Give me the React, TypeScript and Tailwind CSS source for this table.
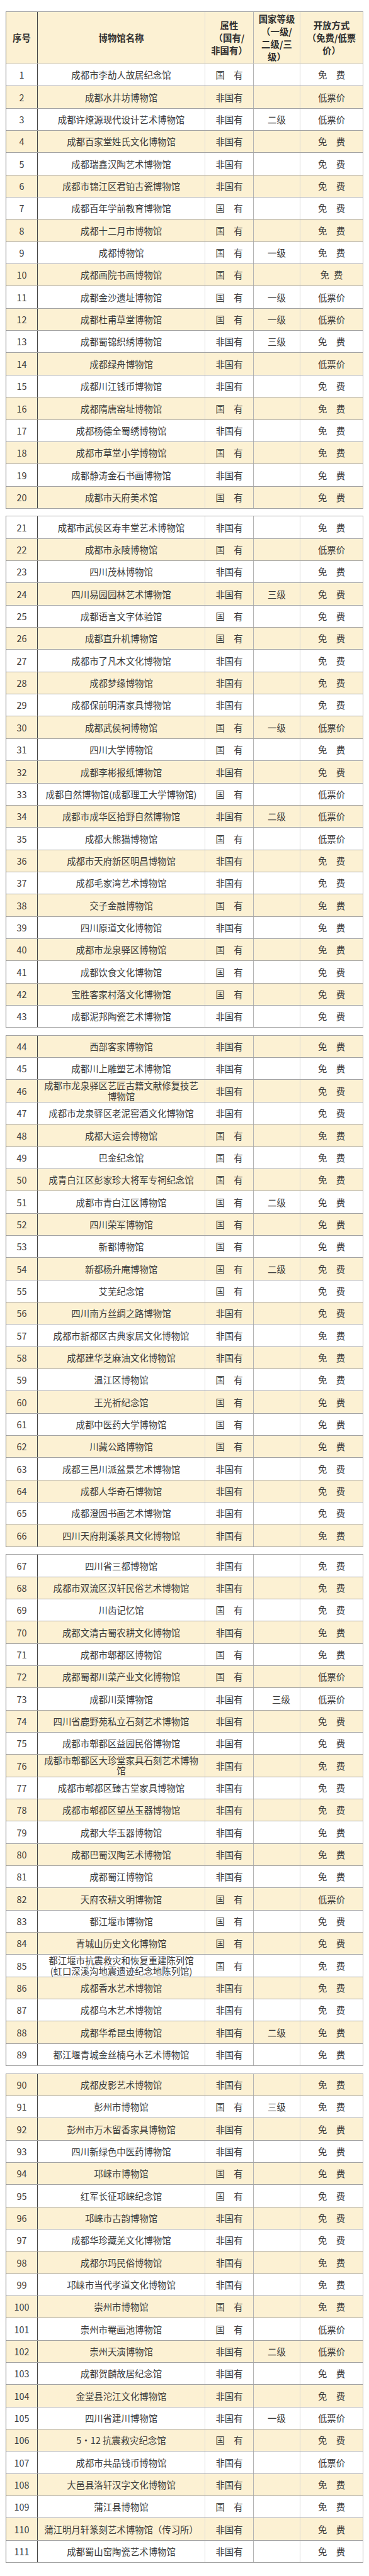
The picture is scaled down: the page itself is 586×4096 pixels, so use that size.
import React from "react"

// 名称,属性(g=国有 n=非国有),等级,开放方式(m=免费 d=低票价)；名称中的 | 表示换行
const DATA = `
成都市李劼人故居纪念馆,g,,m
成都水井坊博物馆,n,,d
成都许燎源现代设计艺术博物馆,n,二级,d
成都百家堂姓氏文化博物馆,n,,m
成都瑞鑫汉陶艺术博物馆,n,,m
成都市锦江区君铂古瓷博物馆,n,,m
成都百年学前教育博物馆,g,,m
成都十二月市博物馆,g,,m
成都博物馆,g,一级,m
成都画院书画博物馆,g,,m2
成都金沙遗址博物馆,g,一级,d
成都杜甫草堂博物馆,g,一级,d
成都蜀锦织绣博物馆,n,三级,m
成都绿舟博物馆,n,,d
成都川江钱币博物馆,n,,m
成都隋唐窑址博物馆,g,,m
成都杨德全蜀绣博物馆,n,,m
成都市草堂小学博物馆,g,,m
成都静涛金石书画博物馆,n,,m
成都市天府美术馆,g,,m
成都市武侯区寿丰堂艺术博物馆,n,,m
成都市永陵博物馆,g,,d
四川茂林博物馆,n,,m
四川易园园林艺术博物馆,n,三级,m
成都语言文字体验馆,g,,m
成都直升机博物馆,g,,m
成都市了凡木文化博物馆,n,,m
成都梦缘博物馆,n,,m
成都保前明清家具博物馆,n,,m
成都武侯祠博物馆,g,一级,d
四川大学博物馆,g,,m
成都李彬报纸博物馆,n,,m
成都自然博物馆(成都理工大学博物馆),g,,d
成都市成华区拾野自然博物馆,n,二级,d
成都大熊猫博物馆,g,,d
成都市天府新区明昌博物馆,n,,m
成都毛家湾艺术博物馆,n,,m
交子金融博物馆,g,,m
四川原道文化博物馆,n,,m
成都市龙泉驿区博物馆,g,,m
成都饮食文化博物馆,g,,m
宝胜客家村落文化博物馆,g,,m
成都泥邦陶瓷艺术博物馆,n,,m
西部客家博物馆,n,,m
成都川上雕塑艺术博物馆,n,,m
成都市龙泉驿区艺匠古籍文献修复技艺|博物馆,n,,m
成都市龙泉驿区老泥窖酒文化博物馆,n,,m
成都大运会博物馆,g,,m
巴金纪念馆,g,,m
成青白江区彭家珍大将军专祠纪念馆,g,,m
成都市青白江区博物馆,g,二级,m
四川荣军博物馆,g,,m
新都博物馆,g,,m
新都杨升庵博物馆,g,二级,m
艾芜纪念馆,g,,m
四川南方丝绸之路博物馆,n,,m
成都市新都区古典家居文化博物馆,n,,m
成都建华芝麻油文化博物馆,n,,m
温江区博物馆,g,,m
王光祈纪念馆,g,,m
成都中医药大学博物馆,g,,m
川藏公路博物馆,g,,m
成都三邑川派盆景艺术博物馆,n,,m
成都人华奇石博物馆,n,,m
成都澄园书画艺术博物馆,n,,m
四川天府荆溪茶具文化博物馆,n,,m
四川省三都博物馆,n,,m
成都市双流区汉轩民俗艺术博物馆,n,,m
川齿记忆馆,g,,m
成都文清古蜀农耕文化博物馆,n,,m
成都市郫都区博物馆,g,,m
成都蜀都川菜产业文化博物馆,g,,d
成都川菜博物馆,n,三级,d
四川省鹿野苑私立石刻艺术博物馆,n,,m
成都市郫都区益园民俗博物馆,n,,m
成都市郫都区大珍堂家具石刻艺术博物|馆,n,,m
成都市郫都区臻古堂家具博物馆,n,,m
成都市郫都区望丛玉器博物馆,n,,m
成都大华玉器博物馆,n,,m
成都巴蜀汉陶艺术博物馆,n,,m
成都蜀江博物馆,n,,m
天府农耕文明博物馆,g,,d
都江堰市博物馆,g,,m
青城山历史文化博物馆,g,,m
都江堰市抗震救灾和恢复重建陈列馆|(虹口深溪沟地震遗迹纪念地陈列馆),g,,m
成都香水艺术博物馆,n,,m
成都乌木艺术博物馆,n,,m
成都华希昆虫博物馆,n,二级,m
都江堰青城金丝楠乌木艺术博物馆,n,,m
成都皮影艺术博物馆,n,,m
彭州市博物馆,g,三级,m
彭州市万木留香家具博物馆,n,,m
四川新绿色中医药博物馆,n,,m
邛崃市博物馆,g,,m
红军长征邛崃纪念馆,g,,m
邛崃市古韵博物馆,n,,m
成都华珍藏羌文化博物馆,n,,m
成都尔玛民俗博物馆,n,,m
邛崃市当代孝道文化博物馆,n,,m
崇州市博物馆,g,,m
崇州市罨画池博物馆,g,,d
崇州天演博物馆,n,二级,d
成都贺麟故居纪念馆,n,,m
金堂县沱江文化博物馆,n,,m
四川省建川博物馆,n,一级,d
5·12 抗震救灾纪念馆,g,,m
成都市共品钱币博物馆,n,,d
大邑县洛轩汉字文化博物馆,n,,m
蒲江县博物馆,g,,m
蒲江明月轩篆刻艺术博物馆（传习所）,n,,m
成都蜀山窑陶瓷艺术博物馆,n,,m
`

const rows = DATA.trim()
  .split("\n")
  .map((line, i) => {
    const [name, own, level, fee] = line.split(",")
    return { no: i + 1, name, own, level, fee }
  })

const GROUPS = [20, 23, 23, 23, 22]

const COLS = "grid grid-cols-[50px_266px_77px_74px_99px]"
const C1 = "flex items-center justify-center border-r border-r-[#454545]"
const C2 = "flex items-center justify-center text-center border-r border-r-[#d9d9d9]"
const C3 = "flex items-center justify-center border-r border-r-[#b3b3b3]"
const C4 = "flex items-center justify-center border-r border-r-[#d4d4d4]"
const C5 = "flex items-center justify-center"

type RowData = (typeof rows)[number]

function Row({ r }: { r: RowData }) {
  const bg = r.no % 2 === 0 ? "bg-[#fcf1d3]" : "bg-white"
  const lines = r.name.split("|")
  const fee = r.fee === "d" ? "低票价" : r.fee === "m2" ? "免\u2002费" : "免\u3000费"
  return (
    <div className={`${COLS} h-[35.35px] border-b border-b-[#a3a3a3] ${bg}`}>
      <div className={C1}>{r.no}</div>
      <div className={C2}>
        {lines.length > 1 ? (
          <div className="leading-[16.5px]">
            {lines.map((l) => (
              <div key={l} className="whitespace-nowrap">
                {l}
              </div>
            ))}
          </div>
        ) : (
          <span className="whitespace-nowrap">{r.name}</span>
        )}
      </div>
      <div className={C3}>{r.own === "g" ? "国\u3000有" : "非国有"}</div>
      <div className={`${C4} ${r.no === 73 ? "pl-[14px]" : ""}`}>{r.level}</div>
      <div className={C5}>{fee}</div>
    </div>
  )
}

function Header() {
  return (
    <div className={`${COLS} h-[83px] border-b border-b-[#c9c9c9] bg-[#fcf1d3] font-semibold leading-[20px] text-[#2f2f2f]`}>
      <div className={C1}>序号</div>
      <div className={C2}>博物馆名称</div>
      <div className={`${C3} text-center`}>
        属性
        <br />
        （国有/
        <br />
        非国有）
      </div>
      <div className={`${C4} text-center`}>
        国家等级
        <br />
        （一级/
        <br />
        二级/三
        <br />
        级）
      </div>
      <div className={`${C5} text-center`}>
        开放方式
        <br />
        （免费/低票
        <br />
        价）
      </div>
    </div>
  )
}

export default function App() {
  let start = 0
  return (
    <div className="w-[586px] bg-white pt-[18px] pb-[18px] font-['Noto_Sans_CJK_SC','Noto_Sans',sans-serif] text-[14.4px] text-[#3a3a3a]">
      <div className="ml-[9px] flex w-[568px] flex-col gap-[11.5px]">
        {GROUPS.map((count, gi) => {
          const slice = rows.slice(start, start + count)
          start += count
          return (
            <div
              key={gi}
              className="border-l border-r border-t border-l-[#6b6b6b] border-r-[#b8b8b8] border-t-[#a3a3a3]"
            >
              {gi === 0 && <Header />}
              {slice.map((r) => (
                <Row key={r.no} r={r} />
              ))}
            </div>
          )
        })}
      </div>
    </div>
  )
}
